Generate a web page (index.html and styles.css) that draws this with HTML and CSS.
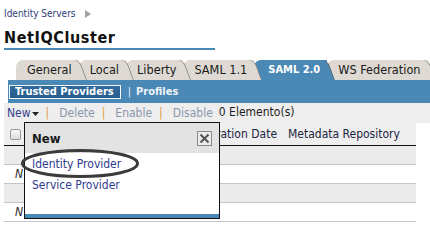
FILE: index.html
```html
<!DOCTYPE html>
<html>
<head>
<meta charset="utf-8">
<link rel="stylesheet" href="styles.css">
</head>
<body>
<div class="page">
  <div class="crumb"><a class="crumb-link">Identity Servers</a><span class="crumb-arrow"></span></div>
  <h1 class="title">NetIQCluster</h1>
  <div class="tabs">
    <span class="tab">General</span>
    <span class="tab">Local</span>
    <span class="tab">Liberty</span>
    <span class="tab">SAML 1.1</span>
    <span class="tab active">SAML 2.0</span>
    <span class="tab">WS Federation</span>
  </div>
  <div class="subbar">
    <span class="subtab selected">Trusted Providers</span>
    <span class="subsep">|</span>
    <span class="subtab">Profiles</span>
  </div>
  <div class="toolbar">
    <span class="tool new">New<svg class="caret" width="7" height="4" viewBox="0 0 7 4"><path d="M0 0H7L3.5 4Z" fill="#222"/></svg></span>
    <span class="sep">|</span>
    <span class="tool disabled">Delete</span>
    <span class="sep">|</span>
    <span class="tool disabled">Enable</span>
    <span class="sep">|</span>
    <span class="tool disabled">Disable</span>
    <span class="count">0 Elemento(s)</span>
  </div>
  <div class="grid">
    <div class="row head">
      <span class="cell"><span class="checkbox"></span></span>
      <span class="cell"></span>
      <span class="cell">Expiration Date</span>
      <span class="cell">Metadata Repository</span>
    </div>
    <div class="row shade"></div>
    <div class="row"><span class="cell"></span><span class="cell name">N</span></div>
    <div class="row shade"></div>
    <div class="row"><span class="cell"></span><span class="cell name">N</span></div>
  </div>

  <div class="dialog">
    <div class="dialog-head">
      <span class="dialog-title">New</span>
      <span class="close"><svg width="11" height="11" viewBox="0 0 11 11"><path d="M1.5 1.5L9.5 9.5M9.5 1.5L1.5 9.5" stroke="#555" stroke-width="2"/></svg></span>
    </div>
    <div class="dialog-body">
      <a class="option">Identity Provider</a>
      <a class="option">Service Provider</a>
    </div>
    <div class="dialog-foot"></div>
  </div>

  <svg class="ring" width="124" height="32" viewBox="0 0 124 32"><ellipse cx="60" cy="15.5" rx="57.5" ry="13" fill="none" stroke="#3b3b3b" stroke-width="3"/></svg>
</div>
</body>
</html>
```

FILE: styles.css
```css
* { box-sizing: border-box; }

html, body {
  margin: 0;
  padding: 0;
  background: #ffffff;
}

.page {
  position: relative;
  width: 430px;
  height: 247px;
  overflow: hidden;
  font-family: "DejaVu Sans Condensed", "DejaVu Sans", sans-serif;
  font-size: 12px;
  color: #222222;
}

/* breadcrumb */
.crumb {
  display: flex;
  align-items: center;
  padding: 7px 0 0 4px;
  height: 21px;
  font-size: 10px;
  line-height: 14px;
}

.crumb-link {
  color: #2d3d77;
}

.crumb-arrow {
  width: 0;
  height: 0;
  margin-left: 9px;
  border-left: 6px solid #a3a199;
  border-top: 4.5px solid transparent;
  border-bottom: 4.5px solid transparent;
}

/* title */
.title {
  margin: 8px 0 0 4px;
  width: 211px;
  font-size: 16px;
  line-height: 18px;
  font-weight: bold;
  letter-spacing: 0.6px;
  color: #111111;
  padding-bottom: 1px;
  border-bottom: 2px solid #4a88b5;
}

/* tabs */
.tabs {
  display: flex;
  margin-top: 10px;
  padding-left: 16px;
  height: 20px;
  font-size: 12.6px;
}

.tab {
  position: relative;
  height: 20px;
  line-height: 20px;
  padding: 0 7px 0 11px;
  background: #dedad3;
  border-top-left-radius: 7px;
  color: #1a1a1a;
  white-space: nowrap;
}

.tab::after {
  content: "";
  position: absolute;
  z-index: 1;
  top: 0;
  bottom: 0;
  left: calc(100% - 1px);
  width: 8px;
  background: #dedad3;
  border-right: 1.5px solid #7d7b76;
  border-top-right-radius: 6px;
  transform: skewX(20deg);
  transform-origin: bottom left;
}

.tab.active {
  background: #4a88b5;
  color: #ffffff;
  font-weight: bold;
  font-size: 11px;
  padding-left: 14px;
}

.tab.active::after {
  background: #4a88b5;
  border-right-color: #5a5a5a;
}

/* sub navigation bar */
.subbar {
  display: flex;
  align-items: center;
  margin-left: 8px;
  height: 23px;
  padding-left: 1px;
  background: #4a88b5;
  font-size: 11px;
  font-weight: bold;
  color: #eef3f8;
}

.subtab.selected {
  padding: 0 6px 0 5px;
  line-height: 12px;
  border: 1px solid #f4f7fa;
  background: linear-gradient(#2f6a9c, #275d8c);
  color: #ffffff;
}

.subsep {
  font-weight: normal;
  margin: 0 5px 0 7px;
}

/* toolbar */
.toolbar {
  display: flex;
  align-items: center;
  margin-left: 4px;
  height: 20px;
  padding-left: 3px;
  background: #eeeeee;
}

.tool.new {
  color: #34438a;
  display: flex;
  align-items: center;
}

.caret {
  margin-left: 1px;
  margin-top: 2px;
}

.tool.disabled {
  color: #8a97ab;
}

.sep {
  color: #e39b3a;
  margin: 0 10px 0 7px;
}

.count {
  margin-left: 6px;
  margin-top: -2px;
  color: #1e1e1e;
}

/* grid */
.grid {
  margin-left: 4px;
  width: 412px;
}

.row {
  display: grid;
  grid-template-columns: 22px 167px 95px 1fr;
  height: 19px;
  border-bottom: 1px solid #c4c4c4;
  align-items: center;
  white-space: nowrap;
  overflow: hidden;
}

.row.head {
  height: 23px;
  background: #eeeeee;
  border-bottom: 1px solid #111111;
  color: #1b2540;
}

.row.shade {
  background: #ebebeb;
}

.cell {
  display: flex;
  align-items: center;
}

.checkbox {
  width: 11px;
  height: 11px;
  margin-left: 6px;
  border: 1px solid #9a9a9a;
  border-radius: 2px;
  background: linear-gradient(#f6f6f6, #dedede);
}

.name {
  font-style: italic;
  color: #2a2a2a;
  margin-left: -11px;
}

/* dialog */
.dialog {
  position: absolute;
  left: 24px;
  top: 122px;
  width: 196px;
  height: 97px;
  display: flex;
  flex-direction: column;
  border: 1px solid #111111;
  background: #ffffff;
}

.dialog-head {
  height: 30px;
  display: flex;
  align-items: center;
  justify-content: space-between;
  padding: 0 7px;
  background: #e3e3e3;
}

.dialog-title {
  font-size: 13px;
  font-weight: bold;
  color: #1a1a1a;
}

.close {
  width: 15px;
  height: 15px;
  display: flex;
  align-items: center;
  justify-content: center;
  border: 1px solid #8a8a8a;
  background: #ececec;
}

.dialog-body {
  flex: 1;
  display: flex;
  flex-direction: column;
  padding: 1px 0 0 7px;
}

.option {
  line-height: 21px;
  color: #2f3a8f;
}

.dialog-foot {
  height: 4px;
  background: #4a88b5;
}

/* annotation ring */
.ring {
  position: absolute;
  left: 20px;
  top: 148px;
}
```
